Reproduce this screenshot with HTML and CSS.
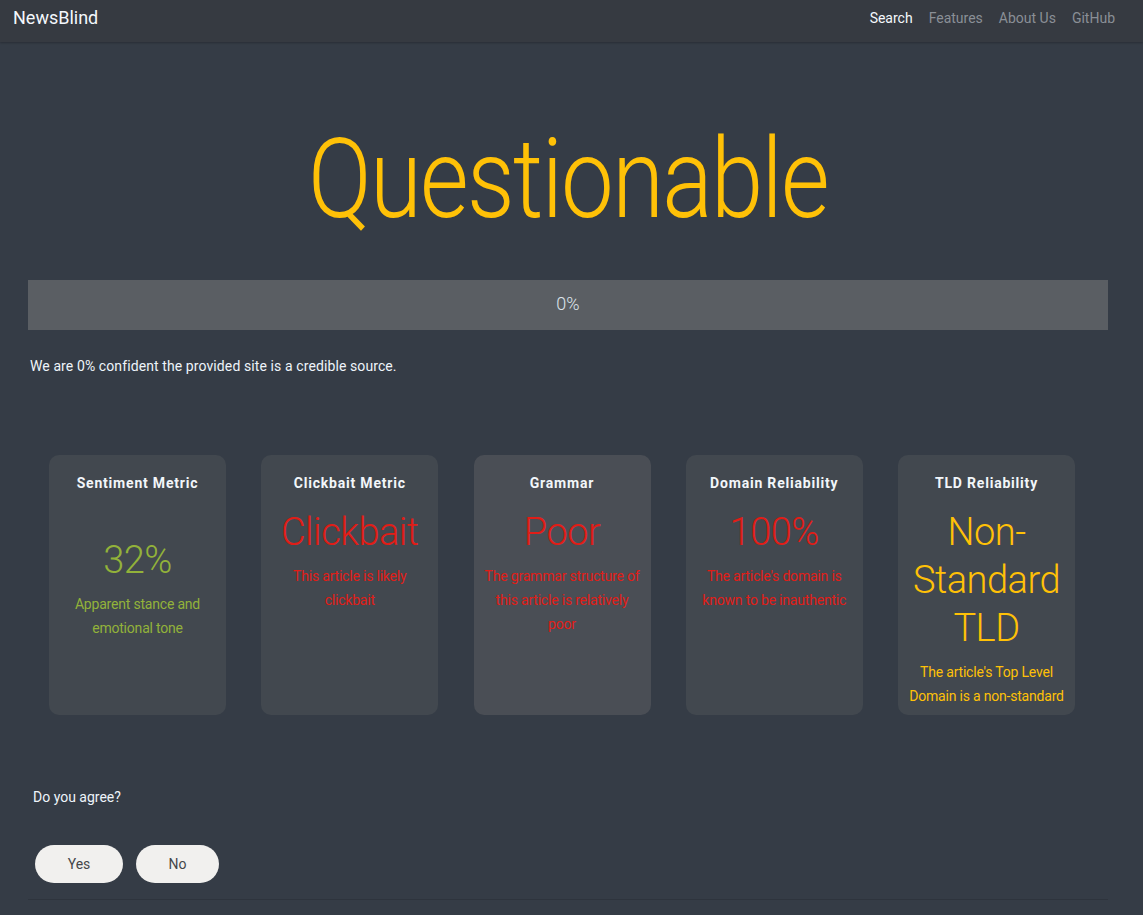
FILE: index.html
```html
<!DOCTYPE html>
<html lang="en">
<head>
<meta charset="utf-8">
<title>NewsBlind</title>
<link rel="stylesheet" href="styles.css">
</head>
<body>
<nav class="navbar">
  <a class="brand" href="#">NewsBlind</a>
  <ul class="nav-links">
    <li><a class="nav-link active" href="#">Search</a></li>
    <li><a class="nav-link" href="#">Features</a></li>
    <li><a class="nav-link" href="#">About Us</a></li>
    <li><a class="nav-link" href="#">GitHub</a></li>
  </ul>
</nav>
<main class="page">
  <h1 class="verdict">Questionable</h1>
  <div class="progress"><span class="progress-label">0%</span></div>
  <p class="confidence">We are 0% confident the provided site is a credible source.</p>

  <section class="metrics">
    <div class="card">
      <h3 class="card-title">Sentiment Metric</h3>
      <div class="card-value green lowered">32%</div>
      <p class="card-desc green">Apparent stance and emotional tone</p>
    </div>
    <div class="card">
      <h3 class="card-title">Clickbait Metric</h3>
      <div class="card-value red">Clickbait</div>
      <p class="card-desc red">This article is likely clickbait</p>
    </div>
    <div class="card card-hover">
      <h3 class="card-title">Grammar</h3>
      <div class="card-value red">Poor</div>
      <p class="card-desc red">The grammar structure of this article is relatively poor</p>
    </div>
    <div class="card">
      <h3 class="card-title">Domain Reliability</h3>
      <div class="card-value red">100%</div>
      <p class="card-desc red">The article's domain is known to be inauthentic</p>
    </div>
    <div class="card">
      <h3 class="card-title">TLD Reliability</h3>
      <div class="card-value yellow">Non-Standard TLD</div>
      <p class="card-desc yellow">The article's Top Level Domain is a non-standard</p>
    </div>
  </section>

  <p class="agree">Do you agree?</p>
  <div class="buttons">
    <button class="pill pill-yes">Yes</button>
    <button class="pill pill-no">No</button>
  </div>
  <hr class="rule">
</main>
</body>
</html>
```
FILE: styles.css
```css
* { box-sizing: border-box; }
html, body {
  margin: 0;
  padding: 0;
  background: #353c46;
  font-family: Roboto, "Liberation Sans", sans-serif;
  color: #eef4fa;
}
a { text-decoration: none; }

.navbar {
  height: 42px;
  background: #363a41;
  box-shadow: 0 1px 2px rgba(0,0,0,0.25);
  display: flex;
  align-items: center;
  justify-content: space-between;
  padding: 0 20px 7px 13px;
}
.brand {
  color: #f4f8fc;
  font-size: 18px;
  font-weight: 400;
}
.nav-links {
  list-style: none;
  display: flex;
  margin: 0;
  padding: 0;
}
.nav-link {
  display: block;
  padding: 0 8px;
  font-size: 14px;
  color: #8a8f96;
}
.nav-link.active { color: #f4f8fc; }

.page {
  padding: 0 35px 0 28px;
}
.verdict {
  margin: 70px 0 0;
  text-align: center;
  font-weight: 300;
  font-size: 112px;
  line-height: 134px;
  color: #ffc107;
  letter-spacing: -2px;
  transform: scaleX(0.84);
}
.progress {
  margin-top: 34px;
  height: 50px;
  background: #5a5e63;
  display: flex;
  align-items: center;
  justify-content: center;
  padding-bottom: 4px;
}
.progress-label {
  font-size: 18px;
  font-weight: 300;
  color: #dde3ea;
}
.confidence {
  margin: 26px 0 0 2px;
  font-size: 14px;
  line-height: 20px;
  letter-spacing: 0.1px;
}

.metrics {
  margin-top: 79px;
  padding-left: 21px;
  display: grid;
  grid-template-columns: repeat(5, 177px);
  column-gap: 35.25px;
}
.card {
  height: 260px;
  overflow: hidden;
  background: #42484f;
  border-radius: 10px;
  padding: 16px 7px 0;
  text-align: center;
}
.card-hover { background: #4a4e55; }
.card-title {
  margin: 0 0 13px;
  font-size: 14px;
  line-height: 24px;
  font-weight: 700;
  letter-spacing: 0.8px;
  color: #f2f6fa;
}
.card-value {
  font-size: 38px;
  font-weight: 300;
  line-height: 48px;
  letter-spacing: -0.5px;
}
.card-value.lowered { margin-top: 41px; }
.card-desc {
  margin: 8px 0 0;
  font-size: 14px;
  line-height: 24px;
  letter-spacing: -0.2px;
}
.green { color: #92b23a; }
.red { color: #e11d17; }
.yellow { color: #ffc107; }

.agree {
  margin: 72px 0 0 5px;
  font-size: 14px;
  line-height: 20px;
}
.buttons {
  display: flex;
  gap: 13px;
  margin: 38px 0 0 7px;
}
.pill {
  height: 38px;
  border: none;
  border-radius: 19px;
  background: #f1f0ee;
  color: #45474a;
  font-family: Roboto, "Liberation Sans", sans-serif;
  font-size: 14px;
}
.pill-yes { width: 88px; }
.pill-no { width: 83px; }
.rule {
  margin: 16px 0 0;
  border: none;
  border-top: 1px solid #2e343d;
}
```
